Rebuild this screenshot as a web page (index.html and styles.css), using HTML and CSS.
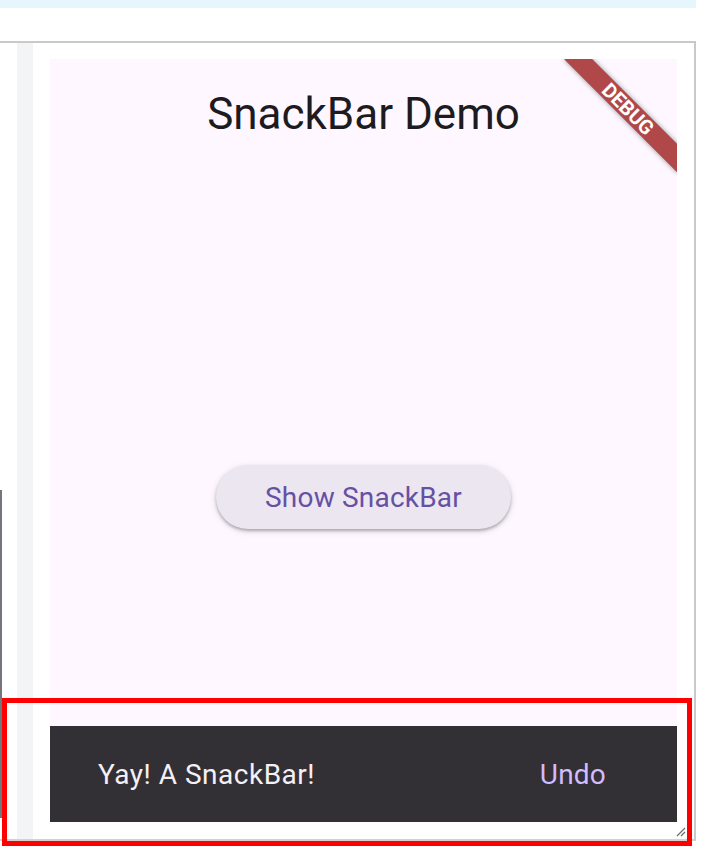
FILE: index.html
```html
<!DOCTYPE html>
<html lang="en">
<head>
<meta charset="utf-8">
<title>SnackBar Demo</title>
<link rel="stylesheet" href="styles.css">
</head>
<body>
<div class="topbar"></div>
<div class="frame">
  <div class="strip"></div>
  <div class="app">
    <header class="appbar">
      <h1 class="title">SnackBar Demo</h1>
    </header>
    <main class="content">
      <button class="show-btn" type="button">Show SnackBar</button>
    </main>
    <div class="snackbar">
      <span class="snack-text">Yay! A SnackBar!</span>
      <span class="snack-action">Undo</span>
    </div>
    <div class="debug-banner"><span>DEBUG</span></div>
  </div>
  <svg class="resize-handle" width="10" height="10" viewBox="0 0 10 10">
    <path d="M1 9 L9 1 M5 9 L9 5" stroke="#6f6f6f" stroke-width="1.2" fill="none"/>
  </svg>
</div>
<div class="side-line"></div>
<div class="highlight"></div>
</body>
</html>
```
FILE: styles.css
```css
html, body {
  margin: 0;
  padding: 0;
  background: #ffffff;
}
body {
  position: relative;
  width: 710px;
  height: 860px;
  overflow: hidden;
  font-family: Roboto, "Noto Sans", sans-serif;
}
.topbar {
  width: 696px;
  height: 8px;
  background: #e5f6fd;
}
.frame {
  position: relative;
  margin-top: 33px;
  width: 694px;
  height: 796px;
  border-top: 2px solid #c9c9c9;
  border-right: 2px solid #c9c9c9;
  border-bottom: 2px solid #d2d2d2;
  display: flex;
  background: #ffffff;
}
.strip {
  margin-left: 17px;
  width: 16px;
  background: #f3f4f6;
}
.app {
  position: relative;
  margin: 16px 0 17px 17px;
  width: 627px;
  height: 763px;
  background: #fef7ff;
  overflow: hidden;
  display: flex;
  flex-direction: column;
}
.appbar {
  height: 113px;
  box-sizing: border-box;
  padding-top: 33px;
}
.title {
  margin: 0;
  text-align: center;
  font-size: 44px;
  font-weight: 400;
  line-height: 1;
  color: #1d1b20;
}
.content {
  flex: 1;
  display: flex;
  align-items: center;
  justify-content: center;
}
.show-btn {
  width: 295px;
  height: 64px;
  border: none;
  border-radius: 32px;
  background: #ece6f0;
  color: #6750a4;
  font-family: Roboto, "Noto Sans", sans-serif;
  font-size: 28px;
  letter-spacing: 0.2px;
  padding: 0;
  box-shadow: 0 2px 3px rgba(0,0,0,0.25), 0 2px 6px 1px rgba(0,0,0,0.1);
}
.snackbar {
  position: absolute;
  left: 0;
  right: 0;
  bottom: 0;
  height: 96px;
  background: #322f35;
  display: flex;
  align-items: center;
  justify-content: space-between;
  padding: 0 71px 0 48px;
  font-size: 28px;
  letter-spacing: 0.5px;
}
.snack-text {
  color: #f5eff7;
}
.snack-action {
  color: #d0bcff;
  letter-spacing: 0.2px;
}
.debug-banner {
  position: absolute;
  left: 498px;
  top: 40px;
  width: 160px;
  height: 20px;
  background: #b04849;
  transform: rotate(45deg);
  box-shadow: 0 0 5px rgba(0,0,0,0.4);
  display: flex;
  align-items: center;
  justify-content: center;
}
.debug-banner span {
  color: #ffffff;
  font-size: 20px;
  font-weight: 700;
  line-height: 1;
}
.resize-handle {
  position: absolute;
  right: 8px;
  bottom: 2px;
}
.side-line {
  position: absolute;
  left: 0;
  top: 490px;
  width: 2px;
  height: 328px;
  background: #73777b;
}
.highlight {
  position: absolute;
  left: 2px;
  top: 698px;
  width: 690px;
  height: 148px;
  box-sizing: border-box;
  border: 5px solid #ff0000;
}
```
